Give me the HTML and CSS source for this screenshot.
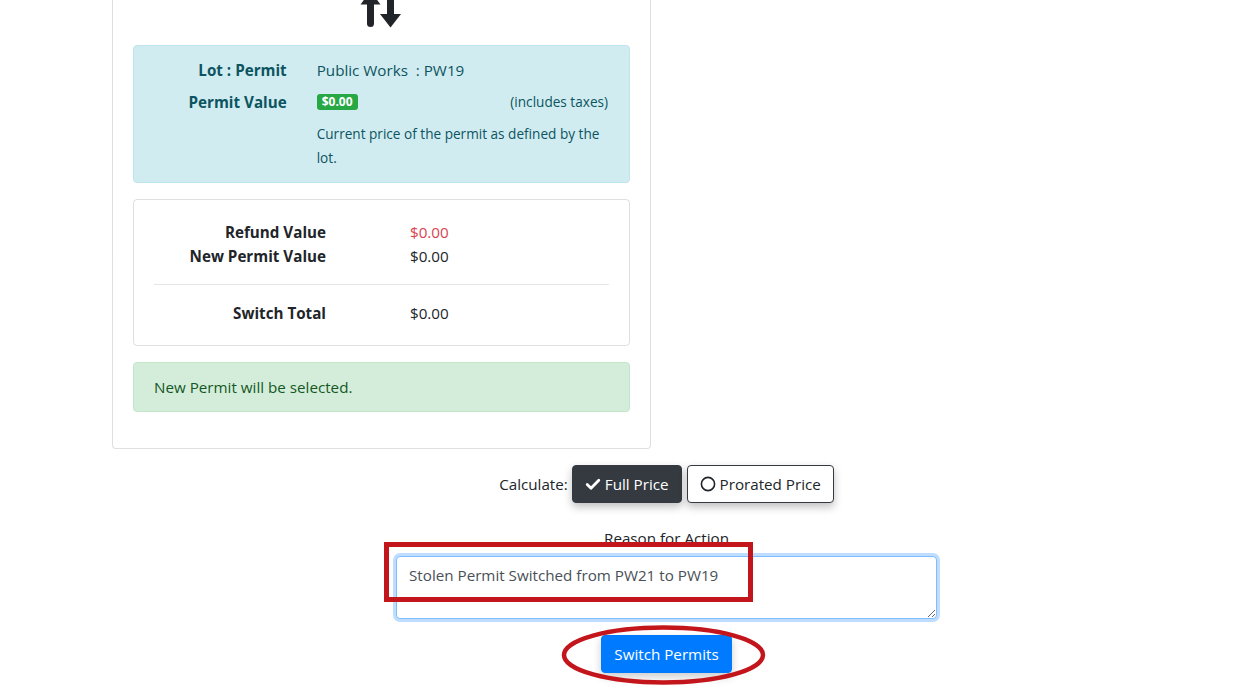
FILE: index.html
```html
<!DOCTYPE html>
<html>
<head>
<meta charset="utf-8">
<link rel="stylesheet" href="styles.css">
</head>
<body>
<div class="page">
  <div class="top">
    <div class="card">
      <div class="card-body">
        <div class="swap-icon">
          <svg width="50" height="28" viewBox="360 0 50 28">
            <polygon points="363.5,4.5 383.5,4.5 373.5,-9" fill="#212529"/>
            <line x1="373.5" y1="0" x2="373.5" y2="23.5" stroke="#212529" stroke-width="7" stroke-linecap="round"/>
            <line x1="393.5" y1="-4" x2="393.5" y2="16" stroke="#212529" stroke-width="7" stroke-linecap="round"/>
            <polygon points="383,14 404,14 393.5,27.5" fill="#212529"/>
          </svg>
        </div>
        <div class="alert alert-info">
          <div class="info-row">
            <div class="info-label">Lot : Permit</div>
            <div class="info-value">Public Works &nbsp;: PW19</div>
          </div>
          <div class="info-row">
            <div class="info-label">Permit Value</div>
            <div class="info-value value-split">
              <span class="badge">$0.00</span>
              <span class="note">(includes taxes)</span>
            </div>
          </div>
          <div class="info-row last">
            <div class="info-label"></div>
            <div class="info-value desc">Current price of the permit as defined by the lot.</div>
          </div>
        </div>
        <div class="totals">
          <div class="tot-row">
            <div class="tot-label">Refund Value</div>
            <div class="tot-value red">$0.00</div>
          </div>
          <div class="tot-row">
            <div class="tot-label">New Permit Value</div>
            <div class="tot-value">$0.00</div>
          </div>
          <hr class="rule">
          <div class="tot-row">
            <div class="tot-label">Switch Total</div>
            <div class="tot-value">$0.00</div>
          </div>
        </div>
        <div class="alert alert-success">New Permit will be selected.</div>
      </div>
    </div>
  </div>
  <div class="bottom">
    <div class="calc-row">
      <span class="calc-label">Calculate:</span>
      <button class="btn btn-dark">
        <svg class="ico" width="16" height="16" viewBox="0 0 16 16"><path d="M2.2 8.6 L6 12.3 L13.8 4.3" fill="none" stroke="#fff" stroke-width="2.8" stroke-linecap="round" stroke-linejoin="round"/></svg>Full Price</button>
      <button class="btn btn-outline">
        <svg class="ico" width="16" height="16" viewBox="0 0 16 16"><circle cx="8" cy="8" r="6.6" fill="none" stroke="#212529" stroke-width="1.6"/></svg>Prorated Price</button>
    </div>
    <label class="reason-label">Reason for Action</label>
    <textarea class="reason" rows="2">Stolen Permit Switched from PW21 to PW19</textarea>
    <button class="btn btn-primary">Switch Permits</button>
  </div>
  <div class="mark-rect"></div>
  <svg class="mark-ellipse" width="210" height="66" viewBox="0 0 210 66">
    <ellipse cx="104.5" cy="32" rx="99.5" ry="27.5" fill="none" stroke="#c3161c" stroke-width="4.5"/>
  </svg>
</div>
</body>
</html>
```

FILE: styles.css
```css
* { box-sizing: border-box; }
html, body { margin: 0; padding: 0; background: #fff; }
body {
  font-family: "Open Sans", "Noto Sans", "Liberation Sans", sans-serif;
  font-size: 15.2px;
  line-height: 24px;
  color: #212529;
}
.page { position: relative; width: 1236px; height: 693px; overflow: hidden; }
.top { padding-left: 112px; }
.card {
  width: 539px;
  border: 1px solid rgba(0,0,0,.125);
  border-top: none;
  border-radius: 0 0 4px 4px;
}
.card-body { padding: 0 20px 20px 20px; }
.swap-icon { height: 28px; margin-bottom: 17px; display: flex; justify-content: center; }
.swap-icon svg { display: block; margin-left: 1px; }
.alert {
  border: 1px solid transparent;
  border-radius: 4px;
  padding: 12px 20px;
  margin-bottom: 16px;
}
.alert-info { background: #d1ecf1; border-color: #bee5eb; color: #0c5460; }
.alert-success { background: #d4edda; border-color: #c3e6cb; color: #155724; margin-bottom: 16px; }
.info-row { display: grid; grid-template-columns: 132.7px 1fr; column-gap: 30px; margin-bottom: 8px; margin-right: 1px; }
.info-row.last { margin-bottom: 0; }
.info-label { text-align: right; font-weight: 700; }
.value-split { display: flex; justify-content: space-between; align-items: center; }
.badge {
  display: inline-block;
  background: #28a745;
  color: #fff;
  font-size: 12px;
  font-weight: 700;
  line-height: 12px;
  padding: 2px 5px;
  border-radius: 3px;
}
.note { font-size: 13.6px; }
.desc { font-size: 13.6px; line-height: 24px; }
.totals {
  border: 1px solid rgba(0,0,0,.125);
  border-radius: 4px;
  padding: 20px;
  margin-bottom: 16px;
}
.tot-row { display: grid; grid-template-columns: 172px 1fr; column-gap: 84px; }
.tot-label { text-align: right; font-weight: 700; }
.red { color: #d9434f; }
.rule { border: 0; border-top: 1px solid rgba(0,0,0,.1); margin: 16px 0; }
.bottom {
  width: 541px;
  margin-left: 396px;
  margin-top: 16px;
  display: flex;
  flex-direction: column;
  align-items: center;
}
.calc-row { display: flex; align-items: center; gap: 5px; margin-bottom: 23px; }
.calc-label { margin-right: -1px; }
.btn {
  font-family: inherit;
  font-size: 15.2px;
  line-height: 24px;
  padding: 6px 12px;
  border: 1px solid transparent;
  border-radius: 4px;
  display: inline-flex;
  align-items: center;
  cursor: pointer;
}
.ico { margin-right: 4px; }
.btn-dark { background: #343a40; border-color: #343a40; color: #fff; box-shadow: 0 4px 8px rgba(0,0,0,.25); }
.btn-outline { background: #fff; border-color: #343a40; color: #212529; box-shadow: 0 4px 8px rgba(0,0,0,.25); }
.reason-label { display: block; margin-bottom: 6px; }
.reason {
  width: 541px;
  height: 63px;
  font-family: inherit;
  font-size: 15.2px;
  line-height: 24px;
  color: #495057;
  padding: 6px 12px;
  border: 1px solid #80bdff;
  border-radius: 4px;
  box-shadow: 0 0 0 3px rgba(0,123,255,.25);
  outline: none;
  resize: vertical;
  margin-bottom: 16px;
}
.btn-primary { background: #007bff; border-color: #007bff; color: #fff; box-shadow: 0 4px 8px rgba(0,0,0,.2); }
.mark-rect {
  position: absolute;
  left: 384px;
  top: 542px;
  width: 369px;
  height: 60px;
  border: 5px solid #c3161c;
}
.mark-ellipse { position: absolute; left: 559px; top: 623px; }
```
